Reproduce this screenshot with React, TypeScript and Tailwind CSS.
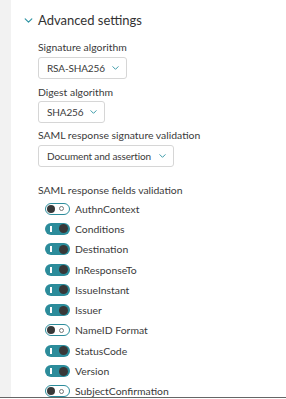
import type { ReactNode } from "react";

const fields: [string, boolean][] = [
  ["AuthnContext", false],
  ["Conditions", true],
  ["Destination", true],
  ["InResponseTo", true],
  ["IssueInstant", true],
  ["Issuer", true],
  ["NameID Format", false],
  ["StatusCode", true],
  ["Version", true],
  ["SubjectConfirmation", false],
];

function Chevron({ className }: { className?: string }) {
  return (
    <svg viewBox="0 0 10 6" className={className} fill="none" stroke="currentColor" strokeWidth="1.4" strokeLinecap="round" strokeLinejoin="round">
      <path d="M1 1l4 4 4-4" />
    </svg>
  );
}

function Select({ width, children }: { width: string; children: ReactNode }) {
  return (
    <div className={`flex h-[22px] items-center justify-between rounded-[3px] border border-[#d6d6d6] bg-white pl-[8px] pr-[7px] text-[10px] tracking-[-0.15px] text-[#3a3a3a] ${width}`}>
      <span className="whitespace-nowrap">{children}</span>
      <Chevron className="h-[4px] w-[7px] shrink-0 text-[#2e93a3]" />
    </div>
  );
}

function Toggle({ on }: { on: boolean }) {
  if (on) {
    return (
      <div className="flex h-[12px] w-[25px] items-center justify-between rounded-full bg-[#2c8c9b] pl-[5px] pr-[2px]">
        <span className="h-[6px] w-[1.5px] bg-white" />
        <span className="h-[9px] w-[9px] rounded-full bg-[#383838]" />
      </div>
    );
  }
  return (
    <div className="flex h-[12px] w-[25px] items-center justify-between rounded-full border border-[#2c8c9b] bg-white pl-[1px] pr-[5px]">
      <span className="h-[8px] w-[8px] rounded-full bg-[#383838]" />
      <span className="h-[5px] w-[5px] rounded-full border border-[#777]" />
    </div>
  );
}

export default function App() {
  return (
    <div className="flex h-[398px] w-[286px] overflow-hidden border-b border-[#666] bg-white font-['Lato',sans-serif] text-[#3a3a3a]">
      <div className="w-[11px] shrink-0 bg-[#f2f2f2]" />
      <div className="flex flex-1 flex-col pl-[13px] pt-[11px]">
        {/* Header */}
        <div className="flex h-[20px] items-center gap-[5px]">
          <Chevron className="h-[5px] w-[9px] text-[#2e93a3]" />
          <span className="text-[13px] text-[#333]">Advanced settings</span>
        </div>

        <div className="flex flex-col items-start pl-[14px] text-[10.4px] leading-[16px]">
          <span className="mt-[8px]">Signature algorithm</span>
          <div className="mt-[2px]">
            <Select width="w-[89px]">RSA-SHA256</Select>
          </div>

          <span className="mt-[5px]">Digest algorithm</span>
          <div className="mt-[1px]">
            <Select width="w-[67px]">SHA256</Select>
          </div>

          <span className="mt-[4px]">SAML response signature validation</span>
          <div className="mt-[2px]">
            <Select width="w-[136px]">Document and assertion</Select>
          </div>

          <span className="mt-[15px]">SAML response fields validation</span>

          <div className="mt-[1px] flex flex-col pl-[7px]">
            {fields.map(([name, on]) => (
              <div key={name} className="flex h-[20.3px] items-center gap-[5px]">
                <Toggle on={on} />
                <span>{name}</span>
              </div>
            ))}
          </div>
        </div>
      </div>
    </div>
  );
}
